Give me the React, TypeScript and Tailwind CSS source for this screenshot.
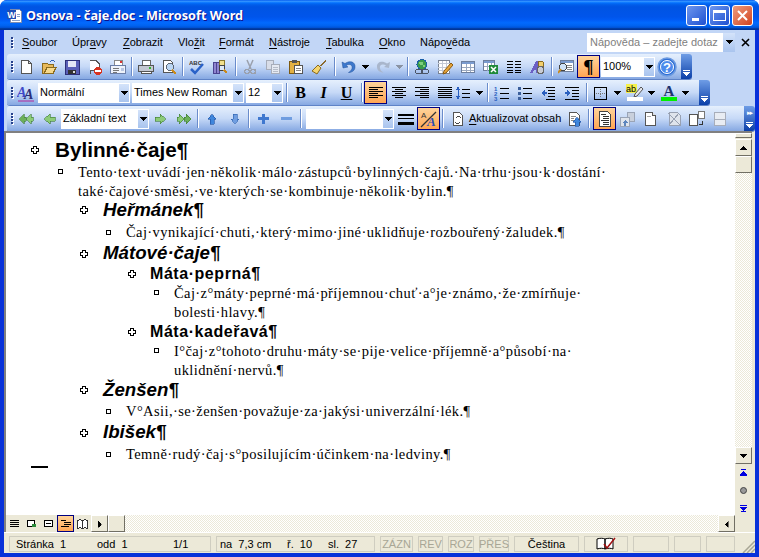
import type { ReactNode } from "react";

const ui = "font-['Liberation_Sans','DejaVu_Sans',sans-serif]";

function Svg({ children, size = 16 }: { children: ReactNode; size?: number }) {
  return (
    <svg width={size} height={size} viewBox="0 0 16 16" className="block" shapeRendering="crispEdges">
      {children}
    </svg>
  );
}

const icons: Record<string, ReactNode> = {
  new: (
    <Svg>
      <path d="M3 1.500h7l3 3v10H3z" fill="#fff" stroke="#555" />
      <path d="M10 1.500v3h3" fill="#ddd" stroke="#555" />
    </Svg>
  ),
  open: (
    <Svg>
      <path d="M1.500 4.500h5l1 1h5v9h-11z" fill="#e8b95a" stroke="#8a6a1e" />
      <path d="M3 14.500l3-6h9l-3 6z" fill="#f7d98c" stroke="#8a6a1e" />
      <path d="M9 3c2-2 4-2 5 0" fill="none" stroke="#2f5fb5" />
    </Svg>
  ),
  save: (
    <Svg>
      <path d="M1 1h14v14H1z" fill="#5a5fb8" stroke="#2c2f78" />
      <path d="M4 2h8v6H4z" fill="#e4e6f6" />
      <path d="M4 11h8v4H4z" fill="#333" />
      <path d="M9 12h2v2H9z" fill="#ddd" />
    </Svg>
  ),
  perm: (
    <Svg>
      <path d="M3 1.500h6l3 3v7H3v3" fill="#fff" stroke="#555" />
      <circle cx="11" cy="12" r="4" fill="#d8321e" />
      <path d="M8 11h6v2H8z" fill="#fff" />
    </Svg>
  ),
  mail: (
    <Svg>
      <path d="M4 1.500h8v6H4z" fill="#fff" stroke="#888" />
      <path d="M10 2h2v2h-2z" fill="#d33" />
      <path d="M.5 6.500h15v8H.5z" fill="#eef2fa" stroke="#6b7ea8" />
      <path d="M3 9h6M3 11h6M3 13h4" stroke="#777" />
      <path d="M11 9h3v3h-3z" fill="#b9c6e2" />
    </Svg>
  ),
  print: (
    <Svg>
      <path d="M4 1.500h8v5H4z" fill="#fff" stroke="#666" />
      <path d="M.5 6.500h15v6H.5z" fill="#c4c8d2" stroke="#555" />
      <path d="M3 12.500h10v2H3z" fill="#fff" stroke="#555" />
      <path d="M11 8h2v2h-2z" fill="#2fb52f" />
    </Svg>
  ),
  preview: (
    <Svg>
      <path d="M2.500 1.500h7l2 2v10h-9z" fill="#fff" stroke="#555" />
      <circle cx="9" cy="8" r="3.500" fill="#bcd7f4" stroke="#5d6675" />
      <path d="M11 11l4 4" stroke="#c98a1c" strokeWidth="2" />
    </Svg>
  ),
  spell: (
    <Svg>
      <text x="0" y="6" fontSize="6" fontFamily="Liberation Sans" fill="#333" fontWeight="700">ABC</text>
      <path d="M2 10l4 4 8-9" fill="none" stroke="#2a62c8" strokeWidth="2.500" shapeRendering="auto" />
    </Svg>
  ),
  research: (
    <Svg>
      <path d="M1 3h3v11H1zM4 3h3v11H4z" fill="#8e84cf" stroke="#4a4390" />
      <path d="M7 1h5v6H7z" fill="#f2e08c" stroke="#8a7a2e" />
      <circle cx="10" cy="9" r="3" fill="#dce9f8" stroke="#444" />
      <path d="M12 11l3 3" stroke="#c98a1c" strokeWidth="2" />
    </Svg>
  ),
  cut: (
    <Svg>
      <path d="M5 1l4 9M11 1L7 10" stroke="#9aa0ac" strokeWidth="1.500" shapeRendering="auto" />
      <circle cx="5" cy="12.500" r="2.300" fill="none" stroke="#9aa0ac" strokeWidth="1.500" />
      <circle cx="11" cy="12.500" r="2.300" fill="none" stroke="#9aa0ac" strokeWidth="1.500" />
    </Svg>
  ),
  copy: (
    <Svg>
      <path d="M1.500 1.500h7v9h-7z" fill="#d8dde8" stroke="#a7adba" />
      <path d="M6.500 5.500h8v9h-8z" fill="#e6eaf2" stroke="#a7adba" />
      <path d="M8 8h5M8 10h5M8 12h5" stroke="#b6bcc8" />
    </Svg>
  ),
  paste: (
    <Svg>
      <path d="M1.500 2.500h10v12h-10z" fill="#e3b144" stroke="#7d5a10" />
      <path d="M4 1h5v3H4z" fill="#555" />
      <path d="M6.500 6.500h8v8h-8z" fill="#fff" stroke="#555" />
      <path d="M8 9h5M8 11h5" stroke="#888" />
    </Svg>
  ),
  paint: (
    <Svg>
      <path d="M9 7L14 1l1 1-5 6z" fill="#8a6a2e" />
      <path d="M1 12l6-6 3 3-4 6z" fill="#f4d56f" stroke="#8a6a1e" shapeRendering="auto" />
    </Svg>
  ),
  undo: (
    <Svg>
      <path d="M1 3l1 6 5-1-2-1.500c3-2 7-1 6 3-.5 2-2 3-3.500 4 4 0 6.500-2.500 6.500-5.500C14.500 3 9 1 4 4.500z" fill="#3d78cc" stroke="#20509a" strokeWidth=".5" shapeRendering="auto" />
    </Svg>
  ),
  redo: (
    <Svg>
      <path d="M15 3l-1 6-5-1 2-1.500c-3-2-7-1-6 3 .5 2 2 3 3.500 4-4 0-6.500-2.500-6.500-5.500C1.500 3 7 1 12 4.500z" fill="#a9b6cc" shapeRendering="auto" />
    </Svg>
  ),
  link: (
    <Svg>
      <circle cx="8" cy="5.500" r="5" fill="#3a9a4a" stroke="#1b5fa8" />
      <path d="M5 3h4v3H6zM9 6h2v2H9z" fill="#7ccf7c" />
      <rect x="1.500" y="10.500" width="7" height="4" rx="2" fill="none" stroke="#4b5566" strokeWidth="1.300" />
      <rect x="7.500" y="10.500" width="7" height="4" rx="2" fill="none" stroke="#4b5566" strokeWidth="1.300" />
    </Svg>
  ),
  tablesb: (
    <Svg>
      <path d="M1.500 1.500h11v13h-11z" fill="#fff" stroke="#7b8494" />
      <path d="M1 4h12M5 2v12M9 2v12M1 8h12M1 11h12" stroke="#c4c9d4" />
      <path d="M14 4l-7 8-1 3 3-1 7-8z" fill="#e6a43a" stroke="#8a5a10" shapeRendering="auto" />
    </Svg>
  ),
  table: (
    <Svg>
      <path d="M1.500 2.500h13v11h-13z" fill="#fff" stroke="#6d7f9e" />
      <path d="M2 3h12v2H2z" fill="#7a9bcf" />
      <path d="M2 8h12M2 11h12M6 5v8M10 5v8" stroke="#9aa8bf" />
    </Svg>
  ),
  excel: (
    <Svg>
      <path d="M.5 1.500h11v10H.5z" fill="#fff" stroke="#6d7f9e" />
      <path d="M1 2h10v2H1z" fill="#7a9bcf" />
      <path d="M1 7h10M4 4v8M8 4v8" stroke="#9aa8bf" />
      <path d="M6 6h9v9H6z" fill="#1f8a3a" />
      <path d="M8 8l5 5M13 8l-5 5" stroke="#fff" strokeWidth="1.500" shapeRendering="auto" />
    </Svg>
  ),
  columns: (
    <Svg>
      <path d="M1 2h6v1H1zM9 2h6v1H9zM1 5h6v1H1zM9 5h6v1H9zM1 8h6v1H1zM9 8h6v1H9zM1 11h6v1H1zM9 11h6v1H9zM1 13h6v1H1zM9 13h6v1H9z" fill="#000" />
    </Svg>
  ),
  drawing: (
    <Svg>
      <path d="M1 14L7 2h3v12H7v-3H5l-1 3z" fill="#6b5fc4" />
      <path d="M9 2l5 1v5l-5-1z" fill="#f2cf6b" stroke="#8a6a1e" />
      <circle cx="11.500" cy="11" r="3.500" fill="#c9ccd4" stroke="#666" />
    </Svg>
  ),
  docmap: (
    <Svg>
      <path d="M2.500 1.500h13v11h-13z" fill="#fff" stroke="#6d7f9e" />
      <path d="M3 2h12v2H3z" fill="#7a9bcf" />
      <path d="M9 6h5M9 8h5M9 10h5" stroke="#888" />
      <circle cx="5" cy="8" r="3.500" fill="#cfe2f7" stroke="#444" />
      <path d="M3 10l-3 4" stroke="#c98a1c" strokeWidth="2" shapeRendering="auto" />
    </Svg>
  ),
  pilcrow: <span className="font-['Liberation_Serif',serif] text-[19px] font-bold leading-none text-black">¶</span>,
  help: (
    <svg width="20" height="20" viewBox="0 0 20 20" className="block">
      <circle cx="10" cy="10" r="9" fill="#2f6fd6" stroke="#6e9be0" strokeWidth="1.500" />
      <circle cx="10" cy="10" r="6.500" fill="#4c8aec" stroke="#fff" />
      <text x="10" y="14.500" textAnchor="middle" fontSize="13" fontWeight="700" fontFamily="Liberation Sans" fill="#fff">?</text>
    </svg>
  ),
  styles: (
    <svg width="18" height="18" viewBox="0 0 18 18" className="block">
      <text x="0" y="13" fontSize="14" fontStyle="italic" fontWeight="700" fontFamily="Liberation Serif" fill="#3f49c8">A</text>
      <text x="7" y="15" fontSize="14" fontStyle="italic" fontWeight="700" fontFamily="Liberation Serif" fill="#2b2f78">A</text>
      <path d="M1 17h16" stroke="#b0279a" />
    </svg>
  ),
  alignL: <Svg><path d="M1 2h14v1H1zM1 4h9v1H1zM1 6h14v1H1zM1 8h9v1H1zM1 10h14v1H1zM1 12h9v1H1z" fill="#000" /></Svg>,
  alignC: <Svg><path d="M1 2h14v1H1zM4 4h8v1H4zM1 6h14v1H1zM4 8h8v1H4zM1 10h14v1H1zM4 12h8v1H4z" fill="#000" /></Svg>,
  alignR: <Svg><path d="M1 2h14v1H1zM6 4h9v1H6zM1 6h14v1H1zM6 8h9v1H6zM1 10h14v1H1zM6 12h9v1H6z" fill="#000" /></Svg>,
  justify: <Svg><path d="M1 2h14v1H1zM1 4h14v1H1zM1 6h14v1H1zM1 8h14v1H1zM1 10h14v1H1zM1 12h14v1H1z" fill="#000" /></Svg>,
  spacing: (
    <Svg>
      <path d="M3 1L1 5h4zM3 15L1 11h4z" fill="#2a5fbf" />
      <path d="M2.500 5h1v6h-1z" fill="#2a5fbf" />
      <path d="M7 4h8v1H7zM7 8h8v1H7zM7 12h8v1H7z" fill="#000" />
    </Svg>
  ),
  numbering: (
    <Svg>
      <text x="0" y="5.500" fontSize="6" fontWeight="700" fontFamily="Liberation Sans" fill="#2a5fbf">1</text>
      <text x="0" y="10.500" fontSize="6" fontWeight="700" fontFamily="Liberation Sans" fill="#2a5fbf">2</text>
      <text x="0" y="15.500" fontSize="6" fontWeight="700" fontFamily="Liberation Sans" fill="#2a5fbf">3</text>
      <path d="M6 3h9v1H6zM6 8h9v1H6zM6 13h9v1H6z" fill="#000" />
    </Svg>
  ),
  bullets: (
    <Svg>
      <path d="M1 2h3v3H1zM1 7h3v3H1zM1 12h3v3H1z" fill="#3b5f9c" />
      <path d="M6 3h9v1H6zM6 8h9v1H6zM6 13h9v1H6z" fill="#000" />
    </Svg>
  ),
  outdent: (
    <Svg>
      <path d="M6 2h9v1H6zM8 5h7v1H8zM8 8h7v1H8zM8 11h7v1H8zM6 14h9v1H6z" fill="#000" />
      <path d="M1 8l4-3v2h2v2H5v2z" fill="#2a5fbf" />
    </Svg>
  ),
  indent: (
    <Svg>
      <path d="M1 2h14v1H1zM8 5h7v1H8zM8 8h7v1H8zM8 11h7v1H8zM1 14h14v1H1z" fill="#000" />
      <path d="M7 8L3 5v2H1v2h2v2z" fill="#2a5fbf" />
    </Svg>
  ),
  border: (
    <Svg>
      <path d="M1.500 2.500h12v12h-12z" fill="none" stroke="#000" />
      <path d="M3 8h1M5 8h1M7 8h1M9 8h1M11 8h1M7.500 4v1M7.500 6v1M7.500 9v1M7.500 11v1" stroke="#777" />
    </Svg>
  ),
  highlight: (
    <svg width="18" height="18" viewBox="0 0 18 18" className="block">
      <path d="M0 0h11v9H0z" fill="#f4f04c" />
      <text x="0" y="8" fontSize="9" fontFamily="Liberation Sans" fill="#000">ab</text>
      <path d="M9 10l6-7 2 2-6 7-3 1z" fill="#e7e9ef" stroke="#555" />
      <path d="M1 13h16v4H1z" fill="#fff" />
    </svg>
  ),
  fontColor: (
    <svg width="18" height="18" viewBox="0 0 18 18" className="block">
      <text x="9" y="12" textAnchor="middle" fontSize="15" fontWeight="700" fontFamily="Liberation Serif" fill="#20336e">A</text>
      <path d="M1 13h16v4H1z" fill="#00f000" />
    </svg>
  ),
  dblLeft: (
    <Svg>
      <path d="M1 8l5-5v3h2v4H6v3z" fill="#6cb05a" stroke="#3c7a32" strokeWidth=".6" />
      <path d="M8 8l5-5v3h2v4h-2v3z" fill="#8ccb78" stroke="#3c7a32" strokeWidth=".6" />
    </Svg>
  ),
  left: <Svg><path d="M3 8l6-5v3h5v4H9v3z" fill="#8ccb78" stroke="#3c7a32" strokeWidth=".6" /></Svg>,
  right: <Svg><path d="M13 8L7 3v3H2v4h5v3z" fill="#8ccb78" stroke="#3c7a32" strokeWidth=".6" /></Svg>,
  dblRight: (
    <Svg>
      <path d="M8 8L3 3v3H1v4h2v3z" fill="#8ccb78" stroke="#3c7a32" strokeWidth=".6" />
      <path d="M15 8l-5-5v3H8v4h2v3z" fill="#6cb05a" stroke="#3c7a32" strokeWidth=".6" />
    </Svg>
  ),
  up: <Svg><path d="M8 3l4 5h-2v5H6V8H4z" fill="#3f86dc" stroke="#1d4f9e" strokeWidth=".6" /></Svg>,
  down: <Svg><path d="M8 13l4-5h-2V3H6v5H4z" fill="#6f9de0" stroke="#2a5fae" strokeWidth=".6" /></Svg>,
  plus: <Svg><path d="M6 3h3v3h4v3H9v4H6V9H2V6h4z" fill="#3f78cf" /></Svg>,
  minus: <Svg><path d="M2 6h11v3H2z" fill="#6f9de0" /></Svg>,
  lines: (
    <svg width="18" height="16" viewBox="0 0 18 16" className="block" shapeRendering="crispEdges">
      <path d="M1 3h16v2H1zM1 7h16v1H1zM1 11h16v3H1z" fill="#000" />
    </svg>
  ),
  fmtA: (
    <svg width="18" height="18" viewBox="0 0 18 18" className="block">
      <path d="M1 17L16 2" stroke="#333" strokeWidth="1.200" />
      <text x="1" y="8" fontSize="8" fontFamily="Liberation Sans" fill="#333">A</text>
      <text x="7" y="16" fontSize="13" fontStyle="italic" fontWeight="700" fontFamily="Liberation Serif" fill="#2b4fb0">A</text>
    </svg>
  ),
  update: (
    <Svg>
      <path d="M3.500 1.500h6l3 3v10h-9z" fill="#fff" stroke="#555" />
      <path d="M6 7c1-2 4-2 5 0M10 11c-1 2-4 2-5 0" fill="none" stroke="#444" />
    </Svg>
  ),
  goTo: (
    <Svg>
      <path d="M2.500 1.500h7l3 3v10h-10z" fill="#fff" stroke="#555" />
      <path d="M4 5h5M4 7h3M4 9h3" stroke="#888" />
      <path d="M10 6l4 5h-2v4H8v-4H6z" fill="#3f86dc" stroke="#1d4f9e" strokeWidth=".6" />
    </Svg>
  ),
  outlineDoc: (
    <Svg>
      <path d="M2.500 .500h8l3 3v12h-11z" fill="#fff" stroke="#444" />
      <path d="M4 3h5M6 5h6M6 7h6M4 9h8M6 11h6M6 13h6" stroke="#333" />
    </Svg>
  ),
  sub1: (
    <Svg>
      <path d="M7.500 1.500h7v9h-7z" fill="#c9d0dc" stroke="#9aa4b6" />
      <path d="M.5 6.500h9v9h-9z" fill="#dfe4ec" stroke="#9aa4b6" />
      <path d="M5 9l3 3H6v3H4v-3H2z" fill="#5d85bd" />
    </Svg>
  ),
  sub2: (
    <Svg>
      <path d="M2.500 1.500h7l3 3v10h-10z" fill="#fff" stroke="#555" />
      <path d="M9.500 1.500v3h3" fill="#ddd" stroke="#555" />
      <path d="M4 5h4" stroke="#aaa" />
    </Svg>
  ),
  sub3: (
    <Svg>
      <path d="M3.500 1.500h8l3 3v10h-11z" fill="#dfe4ec" stroke="#98a1b2" />
      <path d="M2 2l12 12M13 2L3 14" stroke="#98a1b2" />
    </Svg>
  ),
  sub4: (
    <Svg>
      <path d="M.5 3.500h8v11h-8z" fill="#fff" stroke="#555" />
      <path d="M9.500 .5h6v7h-6z" fill="#fff" stroke="#777" />
      <path d="M13 10v3h-3" fill="none" stroke="#333" />
    </Svg>
  ),
  sub5: (
    <Svg>
      <path d="M2.500 1.500h11v13h-11z" fill="#e8ecf3" stroke="#a7adba" />
      <path d="M3 8h10" stroke="#a7adba" />
    </Svg>
  ),
};

function Grip() {
  return (
    <div className="flex h-full w-[7px] shrink-0 flex-col items-end justify-center gap-[1px] pr-[1px]">
      {[0, 1, 2, 3].map((i) => (
        <div key={i} className="h-[2px] w-[2px] bg-[#27418c] shadow-[1px_1px_0_#fff]" />
      ))}
    </div>
  );
}

function Sep({ className = "" }: { className?: string }) {
  return (
    <div className={"flex h-[19px] w-[5px] shrink-0 justify-center " + className}>
      <div className="h-full w-[1px] bg-[#6a8ccb] shadow-[1px_0_0_#fff]" />
    </div>
  );
}

function Tri({ color = "#000" }: { color?: string }) {
  return (
    <svg width="7" height="4" viewBox="0 0 7 4" className="block" shapeRendering="crispEdges">
      <path d="M0 0h7v1H6v1H5v1H4v1H3V3H2V2H1V1H0z" fill={color} />
    </svg>
  );
}

function Btn({ name, active = false, className = "" }: { name: string; active?: boolean; className?: string }) {
  return (
    <div
      className={
        (active
          ? "flex h-[23px] w-[23px] shrink-0 items-center justify-center border border-[#000080] bg-gradient-to-b from-[#ffd49a] to-[#ffa552] "
          : "flex h-[23px] w-[23px] shrink-0 items-center justify-center ") + className
      }
    >
      {icons[name]}
    </div>
  );
}

function Drop({ color = "#000" }: { color?: string }) {
  return (
    <div className="flex h-[23px] w-[11px] shrink-0 items-center justify-center">
      <Tri color={color} />
    </div>
  );
}

function Combo({ text, className }: { text: string; className: string }) {
  return (
    <div className={"flex h-[20px] shrink-0 items-center bg-white pl-[2px] text-[11px] text-black " + className}>
      <span className="flex-1 whitespace-nowrap leading-none">{text}</span>
      <div className="flex h-full w-[12px] items-center justify-center border border-white bg-gradient-to-b from-[#d4e3fa] to-[#a9c4ee]">
        <Tri />
      </div>
    </div>
  );
}

function Chevron({ dots = false }: { dots?: boolean }) {
  return (
    <div className="ml-auto flex h-full w-[11px] shrink-0 flex-col items-center justify-end gap-[1px] rounded-r-[3px] bg-gradient-to-b from-[#6f9de6] to-[#0a3fa8] pb-[3px]">
      {dots && <div className="mb-auto mt-[3px] text-[7px] leading-none tracking-[-1px] text-white">▸▸</div>}
      <div className="h-[1px] w-[7px] bg-white" />
      <Tri color="#fff" />
    </div>
  );
}

function Toolbar({ children, className }: { children: ReactNode; className: string }) {
  return (
    <div
      className={
        "flex h-[25px] shrink-0 items-center rounded-[3px] bg-gradient-to-b from-[#e6f0fd] via-[#c6d9f7] to-[#86a8e2] shadow-[0_1px_0_#5f83c7] " +
        className
      }
    >
      {children}
    </div>
  );
}

function Menu({ text, className }: { text: [string, string, string]; className: string }) {
  return (
    <div className={"shrink-0 text-[11px] leading-none text-black " + className}>
      {text[0]}
      <span className="underline underline-offset-2">{text[1]}</span>
      {text[2]}
    </div>
  );
}

function Cross() {
  return (
    <svg width="8" height="8" viewBox="0 0 8 8" className="block" shapeRendering="crispEdges">
      <path d="M2.500 .5h3v2h2v3h-2v2h-3v-2h-2v-3h2z" fill="#fff" stroke="#000" />
    </svg>
  );
}

function Heading({ className, children }: { className: string; children: ReactNode }) {
  return (
    <div className={"flex items-center " + className}>
      <Cross />
      {children}
    </div>
  );
}

function Para({ className, children }: { className: string; children: ReactNode }) {
  return (
    <div className={"flex " + body + " " + className}>
      <div className="mt-[6px] h-[5px] w-[5px] shrink-0 border border-black bg-white" />
      {children}
    </div>
  );
}

const body = "font-['Liberation_Serif',serif] text-[14.500px] leading-[19px] tracking-[0.41px] text-black";
const h1 = "ml-[16px] font-['Liberation_Sans',sans-serif] text-[20.700px] font-bold leading-none text-black";
const h2 = "ml-[15px] font-['Liberation_Sans',sans-serif] text-[18.700px] font-bold italic leading-none text-black";
const h3 = "ml-[14px] font-['Liberation_Sans',sans-serif] text-[16px] font-bold leading-none tracking-[0.55px] text-black";

const hatch = "bg-[conic-gradient(#fff_25%,#ece9d8_0_50%,#fff_0_75%,#ece9d8_0)] bg-[length:2px_2px]";
const sbBtn = "flex h-[17px] w-[17px] shrink-0 items-center justify-center border border-t-white border-l-white border-b-[#716f64] border-r-[#716f64] bg-[#ece9d8]";

function Panel({ className, children }: { className: string; children?: ReactNode }) {
  return (
    <div className={"flex h-[16px] shrink-0 items-center whitespace-pre border border-[#cfcdc0] text-[11px] leading-none " + className}>
      {children}
    </div>
  );
}

export default function App() {
  return (
    <div className={"flex h-[557px] w-[759px] flex-col overflow-hidden rounded-t-[7px] bg-[#0831d9] " + ui}>
      <div className="flex h-[30px] shrink-0 items-center bg-[linear-gradient(180deg,#0058ee_0%,#3593ff_4%,#288eff_6%,#127dff_8%,#036ffc_10%,#0262ee_14%,#0057e5_20%,#0054e3_24%,#0055eb_56%,#005bf5_66%,#026afe_76%,#0062ef_86%,#0052d6_92%,#0040ab_94%,#003092_100%)] pl-[6px] pr-[6px]">
        <svg width="17" height="17" viewBox="0 0 17 17" className="mr-[3px] block shrink-0" shapeRendering="crispEdges">
          <path d="M4.500 2.500h9l2 2v11h-11z" fill="#fff" stroke="#7b8bb0" />
          <path d="M1 3h9v9H1z" fill="#1f4fb5" />
          <text x="5.500" y="10.500" textAnchor="middle" fontSize="9" fontWeight="700" fontFamily="Liberation Sans" fill="#fff">W</text>
          <path d="M11 7h3M11 9h3M6 13h8" stroke="#8aa0c8" />
        </svg>
        <div className="font-['Noto_Sans',sans-serif] text-[12.700px] font-bold leading-none text-white [text-shadow:1px_1px_0_#0f1089]">
          Osnova - čaje.doc - Microsoft Word
        </div>
        <div className="ml-auto flex gap-[2px]">
          <div className="flex h-[21px] w-[21px] items-end justify-start rounded-[3px] border border-white bg-gradient-to-br from-[#6e96ee] to-[#1f4fd0] pb-[4px] pl-[5px]">
            <div className="h-[3px] w-[7px] bg-white" />
          </div>
          <div className="flex h-[21px] w-[21px] items-center justify-center rounded-[3px] border border-white bg-gradient-to-br from-[#6e96ee] to-[#1f4fd0]">
            <div className="h-[11px] w-[13px] border border-t-[3px] border-white" />
          </div>
          <div className="flex h-[21px] w-[21px] items-center justify-center rounded-[3px] border border-white bg-gradient-to-br from-[#ec9a7c] to-[#d2401a]">
            <svg width="11" height="11" viewBox="0 0 11 11" className="block">
              <path d="M1 1l9 9M10 1l-9 9" stroke="#fff" strokeWidth="2" />
            </svg>
          </div>
        </div>
      </div>

      <div className="mx-[4px] mb-[4px] flex min-h-0 flex-1 flex-col bg-[#ece9d8]">
        <div className="flex shrink-0 flex-col bg-[#c2d6f6]">
          <div className="flex h-[24px] items-center pl-[3px]">
            <Grip />
            <Menu text={["", "S", "oubor"]} className="ml-[8px] w-[50px]" />
            <Menu text={["Úpr", "a", "vy"]} className="w-[51px]" />
            <Menu text={["", "Z", "obrazit"]} className="w-[55px]" />
            <Menu text={["Vlo", "ž", "it"]} className="w-[41px]" />
            <Menu text={["", "F", "ormát"]} className="w-[50px]" />
            <Menu text={["", "N", "ástroje"]} className="w-[57px]" />
            <Menu text={["", "T", "abulka"]} className="w-[53px]" />
            <Menu text={["", "O", "kno"]} className="w-[41px]" />
            <Menu text={["Nápo", "v", "ěda"]} className="w-[60px]" />
            <div className="ml-auto flex h-[19px] w-[148px] items-center bg-white pl-[3px] text-[11px] text-[#808080]">
              <span className="flex-1 whitespace-nowrap leading-none">Nápověda – zadejte dotaz</span>
              <div className="flex h-full w-[12px] items-center justify-center bg-gradient-to-b from-[#d4e3fa] to-[#a9c4ee]"><Tri /></div>
            </div>
            <div className="flex w-[20px] shrink-0 justify-center">
              <svg width="9" height="9" viewBox="0 0 9 9" className="block"><path d="M1 1l7 7M8 1L1 8" stroke="#000" strokeWidth="1.600" /></svg>
            </div>
          </div>

          <Toolbar className="ml-[3px] w-[685px]">
            <Grip />
            <Btn name="new" /><Btn name="open" /><Btn name="save" /><Btn name="perm" /><Btn name="mail" />
            <Sep />
            <Btn name="print" /><Btn name="preview" />
            <Sep />
            <Btn name="spell" /><Btn name="research" />
            <Sep className="ml-[2px]" />
            <Btn name="cut" /><Btn name="copy" /><Btn name="paste" /><Btn name="paint" />
            <Sep className="ml-[2px]" />
            <Btn name="undo" /><Drop />
            <Btn name="redo" /><Drop color="#8a93a3" />
            <Sep />
            <Btn name="link" /><Btn name="tablesb" /><Btn name="table" /><Btn name="excel" /><Btn name="columns" /><Btn name="drawing" />
            <Sep className="ml-[1px]" />
            <Btn name="docmap" /><Btn name="pilcrow" active />
            <Combo text="100%" className="ml-[1px] w-[54px]" />
            <div className="flex w-[24px] shrink-0 justify-center">{icons.help}</div>
            <Chevron />
          </Toolbar>

          <Toolbar className="ml-[3px] mt-[1px] w-[703px]">
            <Grip />
            <Btn name="styles" />
            <Combo text="Normální" className="ml-[1px] w-[92px]" />
            <Combo text="Times New Roman" className="ml-[2px] w-[112px]" />
            <Combo text="12" className="ml-[2px] w-[37px]" />
            <Sep className="ml-[1px]" />
            <div className="flex w-[23px] shrink-0 justify-center font-['Liberation_Serif',serif] text-[16px] font-bold leading-none">B</div>
            <div className="flex w-[23px] shrink-0 justify-center font-['Liberation_Serif',serif] text-[16px] font-bold italic leading-none">I</div>
            <div className="flex w-[23px] shrink-0 justify-center font-['Liberation_Serif',serif] text-[16px] font-bold leading-none underline">U</div>
            <Sep className="ml-[1px]" />
            <Btn name="alignL" active /><Btn name="alignC" /><Btn name="alignR" /><Btn name="justify" />
            <Btn name="spacing" className="-ml-[5px]" /><Drop />
            <Sep />
            <Btn name="numbering" /><Btn name="bullets" /><Btn name="outdent" /><Btn name="indent" className="ml-[1px]" />
            <Sep className="ml-[1px]" />
            <Btn name="border" /><Drop />
            <Btn name="highlight" /><Drop />
            <Btn name="fontColor" /><Drop />
            <Chevron />
          </Toolbar>

          <Toolbar className="ml-[3px] mt-[1px] w-[748px]">
            <Grip />
            <Btn name="dblLeft" /><Btn name="left" />
            <Combo text="Základní text" className="ml-[1px] w-[88px]" />
            <Btn name="right" /><Btn name="dblRight" />
            <Sep />
            <Btn name="up" /><Btn name="down" />
            <Sep />
            <Btn name="plus" className="ml-[1px]" /><Btn name="minus" />
            <Sep />
            <Combo text="" className="ml-[3px] w-[88px]" />
            <Btn name="lines" /><Btn name="fmtA" active />
            <Sep />
            <Btn name="update" className="ml-[1px]" />
            <div className="w-[94px] shrink-0 whitespace-nowrap text-[11px] leading-none text-black"><span className="underline underline-offset-2">A</span>ktualizovat obsah</div>
            <Btn name="goTo" />
            <Sep />
            <Btn name="outlineDoc" active className="ml-[2px]" /><Btn name="sub1" /><Btn name="sub2" /><Btn name="sub3" /><Btn name="sub4" /><Btn name="sub5" />
            <Chevron dots />
          </Toolbar>
        </div>

        <div className="mr-[3px] flex min-h-0 flex-1 border-l-2 border-t-2 border-[#808080]">
          <div className="flex min-w-0 flex-1 flex-col">
            <div className="flex min-h-0 flex-1">
              <div className="min-w-0 flex-1 bg-white pt-[6px]">
                <Heading className="h-[24px] pb-[2px] pl-[25px]"><div className={h1}>Bylinné·čaje¶</div></Heading>
                <Para className="pl-[52px]">
                  <div className="ml-[15px] w-[560px]">Tento·text·uvádí·jen·několik·málo·zástupců·bylinných·čajů.·Na·trhu·jsou·k·dostání· také·čajové·směsi,·ve·kterých·se·kombinuje·několik·bylin.¶</div>
                </Para>
                <Heading className="h-[20px] pb-[2px] pl-[74px]"><div className={h2}>Heřmánek¶</div></Heading>
                <Para className="h-[23px] items-center pl-[100px] [&>div:first-child]:mt-0">
                  <div className="ml-[15px]">Čaj·vynikající·chuti,·který·mimo·jiné·uklidňuje·rozbouřený·žaludek.¶</div>
                </Para>
                <Heading className="h-[19px] pl-[74px]"><div className={h2}>Mátové·čaje¶</div></Heading>
                <Heading className="h-[21px] pl-[122px]"><div className={h3}>Máta·peprná¶</div></Heading>
                <Para className="pl-[148px]">
                  <div className="ml-[15px] w-[420px]">Čaj·z°máty·peprné·má·příjemnou·chuť·a°je·známo,·že·zmírňuje· bolesti·hlavy.¶</div>
                </Para>
                <Heading className="h-[20px] pl-[122px]"><div className={h3}>Máta·kadeřavá¶</div></Heading>
                <Para className="pl-[148px]">
                  <div className="ml-[15px] w-[420px]">I°čaj·z°tohoto·druhu·máty·se·pije·velice·příjemně·a°působí·na· uklidnění·nervů.¶</div>
                </Para>
                <Heading className="h-[20px] pl-[74px]"><div className={h2}>Ženšen¶</div></Heading>
                <Para className="h-[22px] items-center pl-[100px] [&>div:first-child]:mt-0">
                  <div className="ml-[15px]">V°Asii,·se·ženšen·považuje·za·jakýsi·univerzální·lék.¶</div>
                </Para>
                <Heading className="h-[21px] pl-[74px]"><div className={h2}>Ibišek¶</div></Heading>
                <Para className="h-[22px] items-center pl-[100px] [&>div:first-child]:mt-0">
                  <div className="ml-[15px]">Temně·rudý·čaj·s°posilujícím·účinkem·na·ledviny.¶</div>
                </Para>
                <div className="ml-[25px] mt-[1px] h-[2px] w-[17px] bg-black" />
              </div>
              <div className="flex w-[17px] shrink-0 flex-col bg-[#ece9d8]">
                <div className={sbBtn + " !h-[5px] mb-[1px]"} />
                <div className={sbBtn}><div className="rotate-180"><Tri /></div></div>
                <div className={sbBtn} />
                <div className={"flex-1 " + hatch} />
                <div className={sbBtn}><Tri /></div>
                <div className="flex h-[51px] shrink-0 flex-col items-center justify-between pb-[3px] pt-[5px]">
                  <div className="flex flex-col items-center"><div className="h-[1px] w-[5px] bg-[#0000e0]" /><div className="mt-[1px] rotate-180"><Tri color="#0000e0" /></div><div className="h-[1px] w-[7px] bg-[#0000e0]" /></div>
                  <div className="h-[7px] w-[7px] rounded-full border border-[#444] bg-[#999]" />
                  <div className="flex flex-col items-center"><div className="h-[1px] w-[7px] bg-[#0000e0]" /><div className="mt-[1px]"><Tri color="#0000e0" /></div><div className="h-[1px] w-[5px] bg-[#0000e0]" /></div>
                </div>
              </div>
            </div>
            <div className="flex h-[17px] shrink-0 items-center bg-[#ece9d8]">
              <div className="flex w-[85px] shrink-0 items-center">
                <div className="flex w-[17px] justify-center"><svg width="9" height="9" viewBox="0 0 9 9" className="block" shapeRendering="crispEdges"><path d="M0 1h9v1H0zM0 3h9v1H0zM0 5h9v1H0zM0 7h9v1H0z" /></svg></div>
                <div className="flex w-[17px] justify-center"><svg width="9" height="9" viewBox="0 0 9 9" className="block" shapeRendering="crispEdges"><path d="M.5 1.500h7v6h-7z" fill="#fff" stroke="#000" /><path d="M5 5h4v3H5z" fill="#2a8a3a" /></svg></div>
                <div className="flex w-[17px] justify-center"><svg width="9" height="9" viewBox="0 0 9 9" className="block" shapeRendering="crispEdges"><path d="M.5 1.500h8v6h-8z" fill="#fff" stroke="#000" /><path d="M2 4h5" stroke="#000" /></svg></div>
                <div className="flex h-[17px] w-[17px] items-center justify-center border border-[#000080] bg-gradient-to-b from-[#ffd49a] to-[#ffa552]"><svg width="10" height="9" viewBox="0 0 10 9" className="block" shapeRendering="crispEdges"><path d="M0 1h5v1H0zM3 3h7v1H3zM3 5h7v1H3zM0 7h8v1H0z" /></svg></div>
                <div className="flex w-[17px] justify-center"><svg width="11" height="10" viewBox="0 0 11 10" className="block" shapeRendering="crispEdges"><path d="M.5 1.500c2-1 3-1 5 0v8c-2-1-3-1-5 0zM5.500 1.500c2-1 3-1 5 0v8c-2-1-3-1-5 0z" fill="#fff" stroke="#333" /></svg></div>
              </div>
              <div className={sbBtn}><div className="-rotate-90"><Tri /></div></div>
              <div className={sbBtn} />
              <div className={"h-full flex-1 " + hatch} />
              <div className={sbBtn}><div className="rotate-90"><Tri /></div></div>
              <div className="w-[17px] shrink-0" />
            </div>
          </div>
        </div>

        <div className="relative flex h-[21px] shrink-0 items-center border-t border-t-white pl-[5px] pt-[2px]">
          <Panel className="w-[202px] pl-[6px]">
            <span className="w-[81px]">Stránka  1</span><span className="w-[76px]">odd  1</span><span>1/1</span>
          </Panel>
          <Panel className="ml-[5px] w-[159px] pl-[3px]">
            <span className="w-[67px]">na  7,3 cm</span><span className="w-[41px]">ř.  10</span><span>sl.  27</span>
          </Panel>
          <Panel className="ml-[5px] w-[33px] justify-center text-[#a8a695]">ZÁZN</Panel>
          <Panel className="ml-[5px] w-[25px] justify-center text-[#a8a695]">REV</Panel>
          <Panel className="ml-[5px] w-[26px] justify-center text-[#a8a695]">ROZ</Panel>
          <Panel className="ml-[5px] w-[30px] justify-center text-[#a8a695]">PŘES</Panel>
          <Panel className="ml-[5px] w-[65px] justify-center">Čeština</Panel>
          <Panel className="ml-[5px] w-[44px] justify-center">
            <svg width="20" height="14" viewBox="0 0 20 14" className="block">
              <path d="M1 2c3-1 6-1 8 0v10c-2-1-5-1-8 0zM9 2c3-1 6-1 8 0v10c-2-1-5-1-8 0z" fill="#fff" stroke="#000" />
              <path d="M8 7l3 4 8-10" fill="none" stroke="#a01010" strokeWidth="1.500" />
            </svg>
          </Panel>
          <Panel className="ml-[5px] w-[36px]" />
          <Panel className="ml-[5px] w-[27px]" />
          <Panel className="ml-[5px] w-[29px]" />
          <svg width="13" height="13" viewBox="0 0 13 13" className="absolute bottom-0 right-0 block">
            <path d="M1 13L13 1M5 13l8-8M9 13l4-4" stroke="#a8a695" strokeWidth="1.500" />
          </svg>
        </div>
      </div>
    </div>
  );
}
